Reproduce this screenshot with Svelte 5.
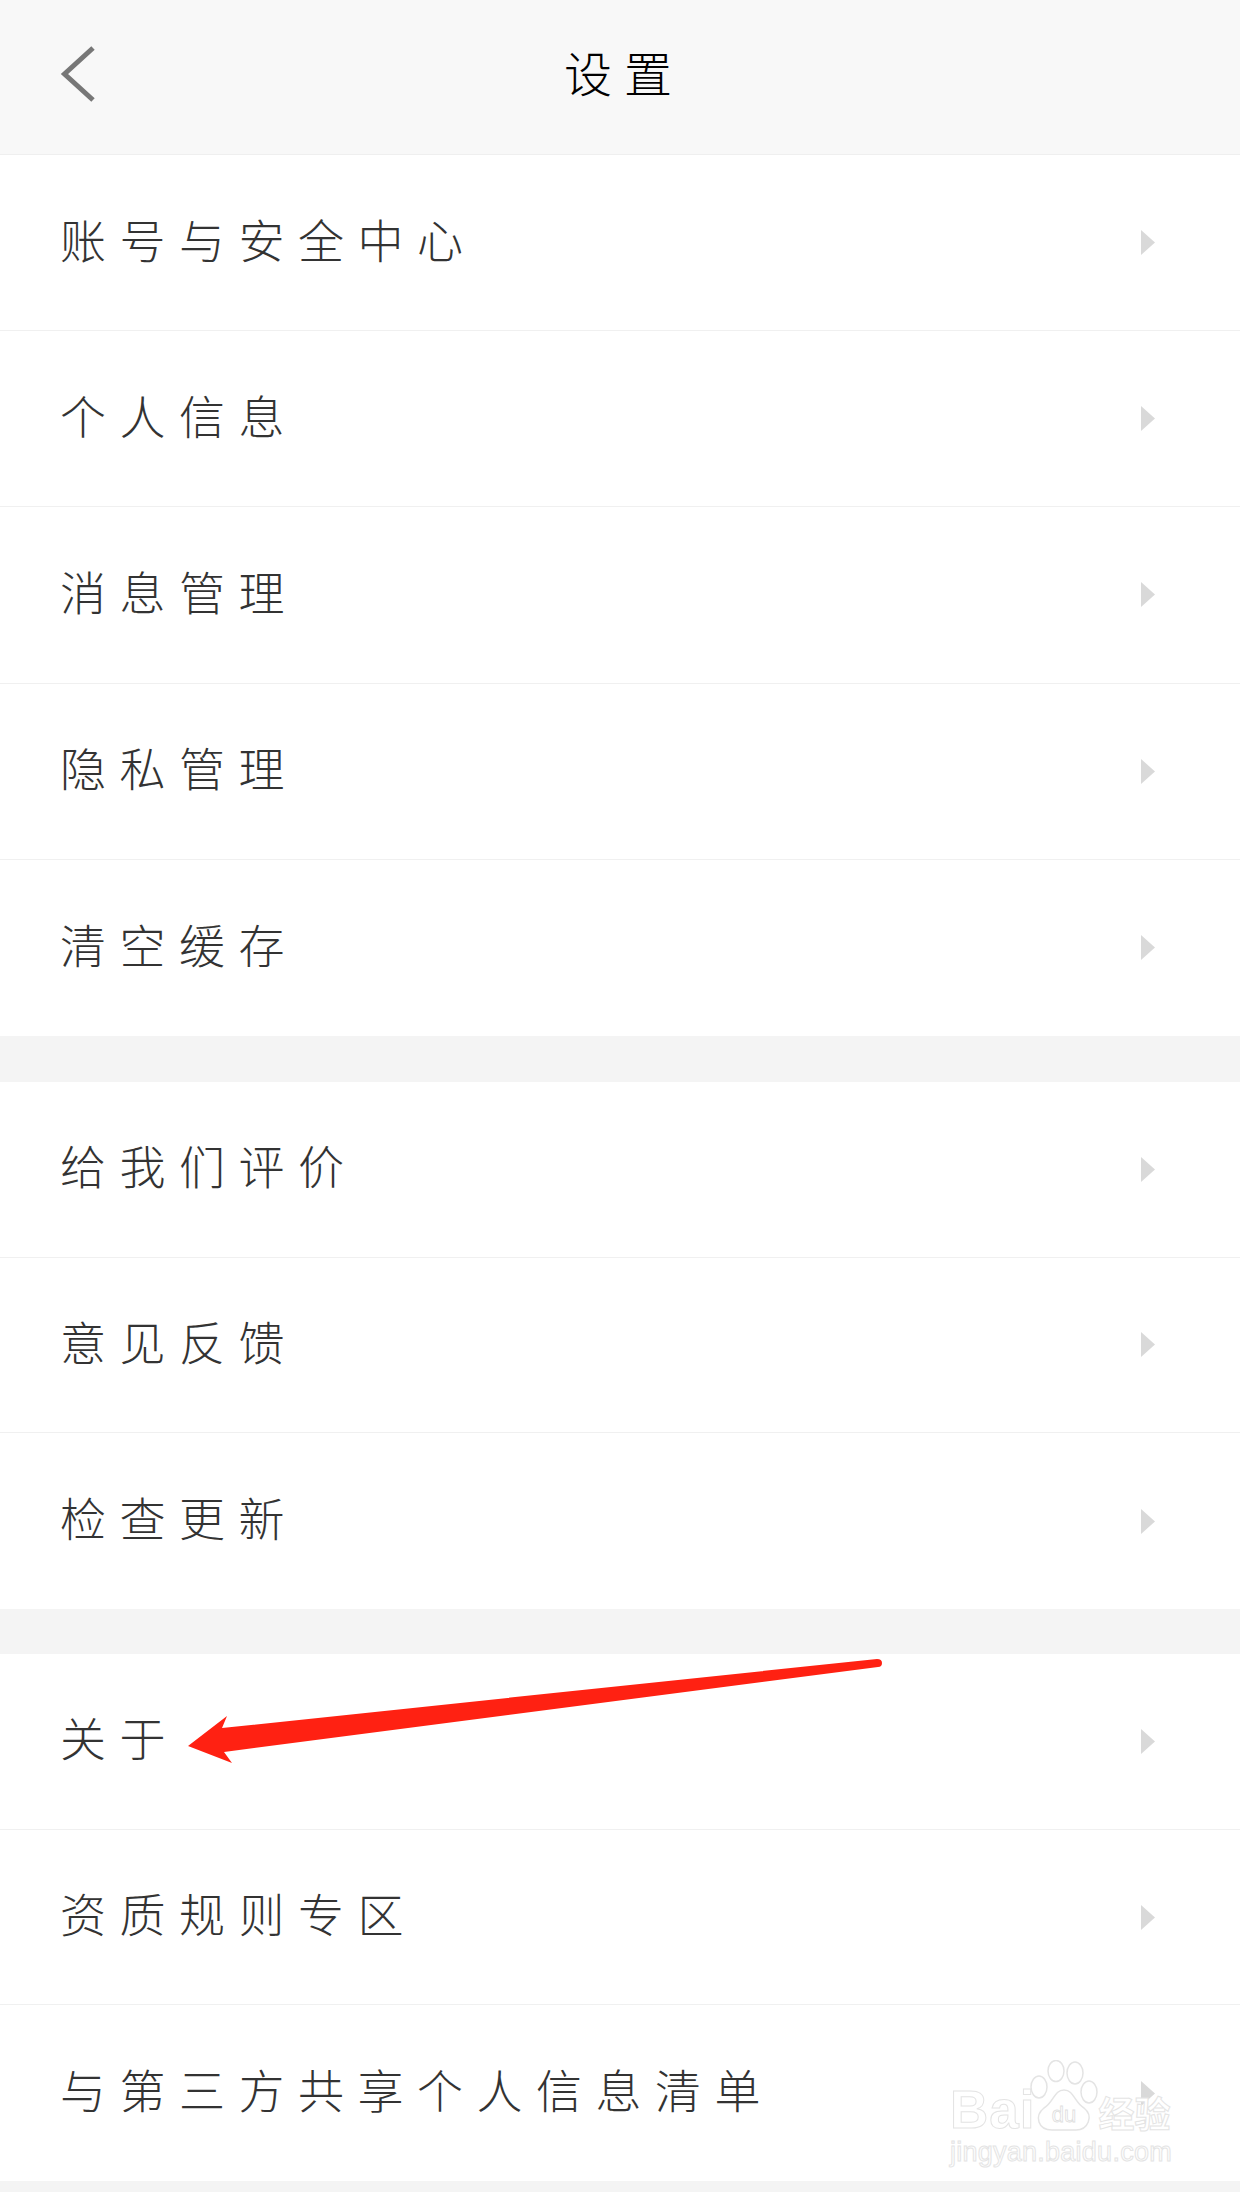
<script>
    const sections = [
        ["账号与安全中心", "个人信息", "消息管理", "隐私管理", "清空缓存"],
        ["给我们评价", "意见反馈", "检查更新"],
        ["关于", "资质规则专区", "与第三方共享个人信息清单"],
    ];
</script>

<div class="page">
    <header class="topbar">
        <svg class="back" width="40" height="60" viewBox="0 0 40 60">
            <path d="M35 4 L6.5 30 L35 56" />
        </svg>
        <h1>设置</h1>
        <span></span>
    </header>

    {#each sections as rows}
        <section class="group">
            {#each rows as label}
                <div class="row">
                    <span class="label">{label}</span>
                    <svg class="caret" width="14" height="25" viewBox="0 0 14 25">
                        <path d="M0 0 L14 12.5 L0 25 Z" />
                    </svg>
                </div>
            {/each}
        </section>
    {/each}

    <!-- annotation arrow drawn over the list -->
    <svg class="arrow" width="1240" height="2192" viewBox="0 0 1240 2192">
        <path d="M877 1659 Q882 1659 882 1663 Q882 1667 878 1667 L224 1752 L232 1763 L188 1746 L227 1716 L222 1728 Z" />
    </svg>

    <!-- watermark -->
    <div class="watermark">
        <div class="mark-top">
            <span class="bai">Bai</span>
            <svg class="paw" width="68" height="72" viewBox="0 0 68 72">
                <ellipse cx="9" cy="27" rx="8" ry="11" />
                <ellipse cx="26" cy="11" rx="8" ry="10.5" />
                <ellipse cx="45" cy="13" rx="8" ry="11" />
                <ellipse cx="59" cy="32" rx="8" ry="11" />
                <path d="M34 30 C44 30 44 42 54 48 C64 56 58 70 46 70 L22 70 C8 70 4 56 14 48 C24 42 24 30 34 30 Z" />
                <text x="34" y="62" text-anchor="middle">du</text>
            </svg>
            <span class="jy">经验</span>
        </div>
        <div class="mark-url">jingyan.baidu.com</div>
    </div>
</div>

<style>
    :global(body) {
        margin: 0;
        background: #f4f4f4;
    }

    .page {
        position: relative;
        width: 1240px;
        height: 2192px;
        overflow: hidden;
        background: #f4f4f4;
        font-family: "Noto Sans CJK SC", "Liberation Sans", sans-serif;
        font-weight: 300;
    }

    .topbar {
        display: grid;
        grid-template-columns: 1fr auto 1fr;
        align-items: center;
        height: 148px;
        padding: 0 58px 6px;
        background: #f8f8f8;
        border-bottom: 1px solid #efefef;
    }

    .back path {
        fill: none;
        stroke: #777;
        stroke-width: 5;
    }

    h1 {
        margin: 0 0 6px;
        padding-left: 8px;
        font-size: 48px;
        font-weight: 300;
        letter-spacing: 12px;
        color: #000;
    }

    .group {
        background: #fff;
        margin-bottom: 45px;
    }

    .group:first-of-type {
        margin-bottom: 46px;
    }

    .group:last-of-type {
        margin-bottom: 0;
    }

    .row {
        display: flex;
        align-items: center;
        justify-content: space-between;
        box-sizing: border-box;
        height: 175.7px;
        padding: 0 85px 0 60px;
        border-bottom: 1px solid #f0f0f0;
    }

    .group:first-of-type .row {
        height: 176.2px;
    }

    .group .row:last-child {
        border-bottom: none;
    }

    .label {
        margin-bottom: 10px;
        font-size: 46px;
        letter-spacing: 13.5px;
        color: #333;
    }

    .caret path {
        fill: #d9d9d9;
    }

    .arrow {
        position: absolute;
        top: 0;
        left: 0;
    }

    .arrow path {
        fill: #ff2112;
    }

    .watermark {
        position: absolute;
        left: 950px;
        top: 2058px;
        width: 226px;
        color: #fff;
        font-family: "Liberation Sans", "Noto Sans CJK SC", sans-serif;
        font-weight: 700;
        -webkit-text-stroke: 1px #e4e4e4;
    }

    .mark-top {
        display: flex;
        align-items: flex-end;
        height: 74px;
    }

    .bai {
        font-size: 53px;
        line-height: 50px;
        margin-bottom: -3px;
        letter-spacing: 1px;
        white-space: nowrap;
    }

    .paw {
        flex: none;
        margin-left: -5px;
    }

    .paw ellipse,
    .paw path {
        fill: rgba(255, 255, 255, 0.8);
        stroke: #e4e4e4;
        stroke-width: 1.5;
    }

    .paw text {
        font-size: 22px;
        font-weight: 400;
        fill: #fff;
        stroke: #dedede;
        stroke-width: 0.8;
        -webkit-text-stroke: 0;
    }

    .jy {
        font-family: "Noto Sans CJK SC", sans-serif;
        font-size: 36px;
        line-height: 40px;
        white-space: nowrap;
    }

    .mark-url {
        margin-top: 4px;
        font-size: 27px;
        line-height: 32px;
        font-weight: 400;
        letter-spacing: 0.25px;
        white-space: nowrap;
    }
</style>
